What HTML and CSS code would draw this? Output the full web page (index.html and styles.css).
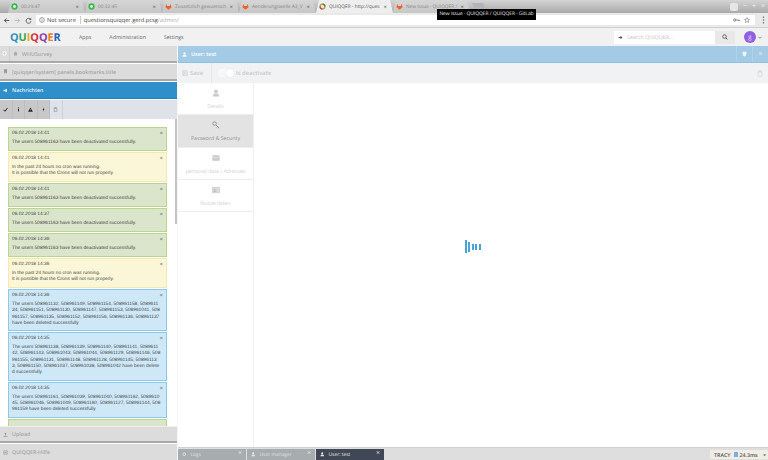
FILE: index.html
```html
<!DOCTYPE html>
<html lang="en">
<head>
<meta charset="utf-8">
<title>QUIQQER</title>
<link rel="stylesheet" href="styles.css">
</head>
<body>
<div class="tabstrip">
  <div class="tab"><svg class="fav" viewBox="0 0 10 10"><circle cx="5" cy="5" r="4.5" fill="#3cb94a"/><circle cx="5" cy="5" r="2" fill="#e8f8ea"/></svg><span class="tab-title">00:29:47</span><span class="tab-x">×</span></div>
  <div class="tab"><svg class="fav" viewBox="0 0 10 10"><circle cx="5" cy="5" r="4.5" fill="#3cb94a"/><circle cx="5" cy="5" r="2" fill="#e8f8ea"/></svg><span class="tab-title">00:32:45</span><span class="tab-x">×</span></div>
  <div class="tab"><svg class="fav" viewBox="0 0 10 10"><path d="M5 9.5 0.6 6 1.8 1l1.2 3.3h4L8.2 1l1.2 5z" fill="#e8662c"/></svg><span class="tab-title">Zusaetzlich gewuensch</span><span class="tab-x">×</span></div>
  <div class="tab"><svg class="fav" viewBox="0 0 10 10"><path d="M5 9.5 0.6 6 1.8 1l1.2 3.3h4L8.2 1l1.2 5z" fill="#e8662c"/></svg><span class="tab-title">Aenderungswelle A3_V</span><span class="tab-x">×</span></div>
  <div class="tab tab-active"><svg class="fav" viewBox="0 0 10 10"><circle cx="5" cy="5" r="3.4" fill="none" stroke="#c0a030" stroke-width="2"/><path d="M5 1.6A3.4 3.4 0 0 1 8.4 5" fill="none" stroke="#3a8f5a" stroke-width="2"/><path d="M1.6 5A3.4 3.4 0 0 0 5 8.4" fill="none" stroke="#c8487a" stroke-width="2"/></svg><span class="tab-title">QUIQQER - http://ques</span><span class="tab-x">×</span></div>
  <div class="tab"><svg class="fav" viewBox="0 0 10 10"><path d="M5 9.5 0.6 6 1.8 1l1.2 3.3h4L8.2 1l1.2 5z" fill="#e8662c"/></svg><span class="tab-title">New Issue · QUIQQER /</span><span class="tab-x">×</span></div>
  <div class="newtab"></div>
  <div class="winctl"><span class="winbtn"></span><span>−</span><span>+</span><span>×</span></div>
</div>
<div class="tooltip">New Issue · QUIQQER / QUIQQER · GitLab</div>
<div class="addrbar">
  <svg class="nav" viewBox="0 0 10 10"><path d="M9 5H2M5 2 2 5l3 3" fill="none" stroke="#555" stroke-width="1.400"/></svg>
  <svg class="nav" viewBox="0 0 10 10"><path d="M1 5h7M5 2l3 3-3 3" fill="none" stroke="#bbb" stroke-width="1.400"/></svg>
  <svg class="nav" viewBox="0 0 10 10"><path d="M8 3.500A3.500 3.500 0 1 0 8.500 6" fill="none" stroke="#555" stroke-width="1.300"/><path d="M8.800 1v3.200H5.600z" fill="#555"/></svg>
  <div class="omnibox">
    <svg class="info" viewBox="0 0 10 10"><circle cx="5" cy="5" r="4" fill="none" stroke="#555" stroke-width=".9"/><path d="M5 4.300v3M5 2.500v1" stroke="#555"/></svg><span class="secure">Not secure</span><span class="url"><b>questionsquiqqer.gerd.pcsg</b>/admin/</span>
    <svg class="keyicon" viewBox="0 0 12 6"><circle cx="3" cy="3" r="2" fill="none" stroke="#555" stroke-width="1.200"/><path d="M5 3h6v2M9 3v1.500" fill="none" stroke="#555"/></svg>
    <svg class="star" viewBox="0 0 10 10"><path d="M5 1l1.200 2.800 3 .3-2.300 2 .7 3L5 7.500 2.400 9.100l.7-3-2.300-2 3-.3z" fill="none" stroke="#555" stroke-width=".8"/></svg>
  </div>
  <svg class="menu" viewBox="0 0 3 12"><circle cx="1.5" cy="2" r="1.1" fill="#666"/><circle cx="1.5" cy="6" r="1.1" fill="#666"/><circle cx="1.5" cy="10" r="1.1" fill="#666"/></svg>
</div>
<header class="apphead">
  <div class="logo"><span class="q1">Q</span><span class="q2">U</span><span class="q3">I</span><span class="q4">Q</span><span class="q5">Q</span><span class="q6">E</span><span class="q7">R</span></div>
  <nav class="mainnav"><span>Apps</span><span>Administration</span><span>Settings</span></nav>
  <div class="search"><svg class="search-go" viewBox="0 0 10 10"><path d="M1 4h4V1.500L9 5 5 8.500V6H1z" fill="#555"/></svg><span class="search-text">Search QUIQQER...</span><span class="search-btn"><svg viewBox="0 0 10 10"><circle cx="4.200" cy="4.200" r="3" fill="none" stroke="#555" stroke-width="1.400"/><path d="M6.500 6.500 9 9" stroke="#555" stroke-width="1.600"/></svg></span></div>
  <div class="avatar">g</div><svg class="chev" viewBox="0 0 10 6"><path d="M1 1l4 4 4-4" fill="none" stroke="#555" stroke-width="1.500"/></svg>
</header>
<main class="workspace">
  <aside class="leftcol">
    <div class="collapsed"><span class="plus"><svg viewBox="0 0 10 10"><circle cx="5" cy="5" r="4.500" fill="#f4f4f4"/><path d="M5 2.500v5M2.500 5h5" stroke="#c8c8c8" stroke-width="1.200"/></svg></span><svg class="picon" viewBox="0 0 10 10"><path d="M5 1 .5 5H2v4h6V5h1.500z" fill="#aaa"/></svg><span>WHUSurvey</span></div>
    <div class="collapsed"><svg class="picon" viewBox="0 0 10 10"><path d="M2 .5h6v9L5 7.200 2 9.500z" fill="#999"/></svg><span>[quiqqer/system] panels.bookmarks.title</span></div>
    <div class="nach-head"><svg class="picon" viewBox="0 0 10 10"><path d="M1 3.500h3L8 1v8L4 6.500H1z" fill="#dcecf6"/></svg><span>Nachrichten</span></div>
    <div class="filterbar">
      <span class="fbtn"><svg viewBox="0 0 10 10"><path d="M1 5.500 4 8.500 9 2" fill="none" stroke="#222" stroke-width="2"/></svg></span>
      <span class="fbtn"><svg viewBox="0 0 10 10"><path d="M5 3.800v5M5 1v1.800" stroke="#222" stroke-width="2"/></svg></span>
      <span class="fbtn"><svg viewBox="0 0 10 10"><path d="M5 1 9.800 9.300H.2z" fill="#222"/><path d="M5 4v3" stroke="#ccc"/></svg></span>
      <span class="fbtn"><svg viewBox="0 0 10 10"><path d="M6 .5 3 5.500h1.800L3.800 9.500 7 4H5.200z" fill="#222"/></svg></span>
      <span class="fbtn fbtn-plain"><svg viewBox="0 0 8 9"><path d="M1.500 2.500h5V8h-5zM1 1.500h6M3 1h2" fill="none" stroke="#777" stroke-width=".8"/></svg></span>
    </div>
    <div class="msgarea">
      <div class="msglist">
        <div class="msg ok h24"><span class="x">×</span><p class="date">06.02.2018 14:41</p><p>The users 508961163 have been deactivated successfully.</p></div>
        <div class="msg warn h30"><span class="x">×</span><p class="date">06.02.2018 14:41</p><p>In the past 24 hours no cron was running.<br>It is possible that the Crons will not run properly.</p></div>
        <div class="msg ok h24"><span class="x">×</span><p class="date">06.02.2018 14:41</p><p>The users 508961163 have been deactivated successfully.</p></div>
        <div class="msg ok h24"><span class="x">×</span><p class="date">06.02.2018 14:37</p><p>The users 508961163 have been deactivated successfully.</p></div>
        <div class="msg ok h24"><span class="x">×</span><p class="date">06.02.2018 14:36</p><p>The users 508961163 have been deactivated successfully.</p></div>
        <div class="msg warn h30"><span class="x">×</span><p class="date">06.02.2018 14:36</p><p>In the past 24 hours no cron was running.<br>It is possible that the Crons will not run properly.</p></div>
        <div class="msg info-msg"><span class="x">×</span><p class="date">06.02.2018 14:36</p><p>The users 508961132, 508961149, 508961154, 508961158, 5089611<br>34, 508961151, 508961130, 508961147, 508961153, 508961041, 508<br>961157, 508961135, 508961152, 508961156, 508961136, 508961137<br>have been deleted successfully</p></div>
        <div class="msg info-msg"><span class="x">×</span><p class="date">06.02.2018 14:35</p><p>The users 508961138, 508961139, 508961140, 508961141, 5089611<br>42, 508961143, 508961043, 508961044, 508961129, 508961146, 508<br>961155, 508961131, 508961148, 508961128, 508961145, 50896113<br>3, 508961150, 508961037, 508961038, 508961042 have been delete<br>d successfully</p></div>
        <div class="msg info-msg"><span class="x">×</span><p class="date">06.02.2018 14:35</p><p>The users 508961161, 508961039, 508961040, 508961162, 5089610<br>45, 508961046, 508961049, 508961160, 508961127, 508961144, 508<br>961159 have been deleted successfully</p></div>
        <div class="msg ok h24"></div>
      </div>
      <div class="scrolltrack"><div class="scrollthumb"></div></div>
    </div>
    <div class="collapsed upload"><svg class="picon" viewBox="0 0 10 10"><path d="M5 1 2.500 4H4v3h2V4h1.500zM1 8h8v1.500H1z" fill="#999"/></svg><span>Upload</span></div>
    <div class="collapsed last"><svg class="picon" viewBox="0 0 10 10"><path d="M1.500 1.500h7v7h-7z" fill="none" stroke="#999" stroke-width="1.200"/><path d="M3 4h4v2H3z" fill="#999"/></svg><span>QUIQQER-Hilfe</span></div>
  </aside>
  <section class="rightcol">
    <div class="user-head"><svg class="uicon" viewBox="0 0 10 10"><circle cx="5" cy="3" r="2.300" fill="#f2f8fc"/><path d="M1 9.500c0-3 1.500-4 4-4s4 1 4 4z" fill="#f2f8fc"/></svg><span class="utitle">User: test</span><span class="uh-btn"><svg viewBox="0 0 8 9"><path d="M1 1h6v3.500C7 6.500 5.500 8 4 8.500 2.500 8 1 6.500 1 4.500z" fill="#eef6fb"/></svg></span><span class="uh-btn">×</span></div>
    <div class="user-tools">
      <span class="save"><svg viewBox="0 0 9 9"><path d="M1 1h5.500L8 2.500V8H1zM2.500 1v2.500h3.500V1M2.500 8V5.500h4V8" fill="none" stroke="#c8c8c8" stroke-width=".8"/></svg>Save</span>
      <span class="toggle"><i></i></span><span class="deact">Is deactivate</span>
      <svg class="trash" viewBox="0 0 8 9"><path d="M1.500 2.500h5V8h-5zM1 1.500h6M3 1h2" fill="none" stroke="#d0d0d0" stroke-width=".8"/></svg>
    </div>
    <div class="user-body">
      <div class="cats">
        <div class="cat"><svg viewBox="0 0 10 10"><circle cx="5" cy="3" r="2.300" fill="#c9c9c9"/><path d="M1 9.500c0-3 1.500-4 4-4s4 1 4 4z" fill="#c9c9c9"/></svg><span>Details</span></div>
        <div class="cat cat-on"><svg viewBox="0 0 10 10"><circle cx="3.200" cy="3.200" r="2.200" fill="none" stroke="#8f8f8f" stroke-width="1.100"/><path d="M5 5l4 3.800M7.200 6.800 6 8.200M8.200 7.800 7.200 9" fill="none" stroke="#8f8f8f" stroke-width="1.100"/></svg><span>Password &amp; Security</span></div>
        <div class="cat"><svg viewBox="0 0 10 10"><path d="M.5 1.500h9v7h-9z" fill="#c9c9c9"/><path d="M.5 2.500 5 5.500l4.500-3" fill="none" stroke="#fff" stroke-width=".7"/></svg><span>personal data / Adresses</span></div>
        <div class="cat"><svg viewBox="0 0 10 8"><rect x=".4" y=".4" width="9.200" height="7.200" fill="#ddd" stroke="#c4c4c4" stroke-width=".6"/><path d="M3.500 1.800v3M2 3.500l1.500 1.500L5 3.500M1.500 6h4" stroke="#aaa" stroke-width=".7" fill="none"/></svg><span>Nutzerdaten</span></div>
      </div>
      <div class="content"></div>
    </div>
    <div class="taskbar">
      <span class="task"><svg class="ticon" viewBox="0 0 10 10"><circle cx="5" cy="5" r="3" fill="none" stroke="#e4e6ea" stroke-width="2"/></svg><span class="ttext">Logs</span><b>×</b></span>
      <span class="task"><svg class="ticon" viewBox="0 0 10 10"><circle cx="5" cy="3" r="2.300" fill="#e4e6ea"/><path d="M1 9.500c0-3 1.500-4 4-4s4 1 4 4z" fill="#e4e6ea"/></svg><span class="ttext">User manager</span><b>×</b></span>
      <span class="task task-on"><svg class="ticon" viewBox="0 0 10 10"><circle cx="5" cy="3" r="2.300" fill="#e4e6ea"/><path d="M1 9.500c0-3 1.500-4 4-4s4 1 4 4z" fill="#e4e6ea"/></svg><span class="ttext">User: test</span><b>×</b></span>
    </div>
    <div class="loader"><div class="spinner"><i class="s1"></i><i class="s2"></i><i class="s3"></i><i class="s3"></i><i class="s3"></i></div></div>
  </section>
</main>
<div class="tracy"><span>TRACY</span><i></i><span>24.3ms</span><span class="tx">×</span></div>
</body>
</html>
```
FILE: styles.css
```css
* { box-sizing: border-box; }
html, body { margin: 0; padding: 0; }
body { width: 768px; height: 460px; overflow: hidden; font-family: "Open Sans", "Liberation Sans", sans-serif; font-size: 5.300px; color: #555; background: #fff; position: relative; text-rendering: geometricPrecision; }
p { margin: 0; }

.tabstrip { height: 13px; display: flex; padding-left: 8px; background: linear-gradient(#d4d4d4, #a9a9a9); }
.tab { width: 77px; height: 13px; flex: none; display: flex; align-items: center; padding: 0 6px 0 3px; gap: 3px; background: linear-gradient(#d6d6d6, #c6c6c6); clip-path: polygon(0 100%, 3px 0, calc(100% - 3px) 0, 100% 100%); color: #888; font-size: 4.800px; white-space: nowrap; }
.tab-active { background: #eeeeee; color: #555; }
.tab .fav { width: 7px; height: 7px; flex: none; }
.tab-title { flex: 1; min-width: 0; }
.tab-x { font-size: 6px; color: #666; }
.newtab { width: 14px; height: 7px; margin: 3px 0 0 2px; background: #b5b5b5; clip-path: polygon(0 0, 80% 0, 100% 100%, 20% 100%); }
.winctl { margin-left: auto; margin-right: 3px; display: flex; align-items: center; gap: 5px; color: #f0f0f0; font-size: 7px; }
.winbtn { width: 8px; height: 8px; background: #e6e6e6; border-radius: 2px; }

.tooltip { position: absolute; left: 437px; top: 9px; width: 99px; height: 11px; background: #000; color: #eee; font-size: 4.900px; line-height: 11px; text-align: center; z-index: 5; white-space: nowrap; }

.addrbar { height: 14px; background: #e9e9e9; display: flex; align-items: center; padding-left: 3px; }
.nav { width: 7px; height: 7px; margin-right: 4px; flex: none; }
.omnibox { flex: 1; height: 10px; margin: 0 7px 0 0; background: #fff; display: flex; align-items: center; padding-left: 3px; font-size: 5.700px; color: #555; white-space: nowrap; }
.info { width: 6px; height: 6px; margin-right: 2px; flex: none; }
.secure { padding-right: 4px; border-right: 1px solid #ccc; margin-right: 3px; color: #444; }
.url { color: #aaa; }
.url b { color: #444; font-weight: 400; }
.keyicon { width: 7px; height: 4px; margin-left: auto; }
.star { width: 6px; height: 6px; margin: 0 5px 0 4px; }
.menu { width: 3px; height: 8px; margin-right: 3px; flex: none; }

.apphead { height: 19px; display: flex; align-items: center; background: #f1f1f1; border-top: 1px solid #d0d0d0; padding-left: 10px; }
.logo { font-weight: 700; font-size: 10.800px; width: 52px; white-space: nowrap; }
.q1 { color: #2a8fc8; } .q2 { color: #3aa04a; } .q3 { color: #d8b020; } .q4 { color: #d83030; } .q5 { color: #8a40a8; } .q6 { color: #e8801c; } .q7 { color: #2a60b8; }
.mainnav { display: flex; gap: 18px; margin-left: 17px; font-size: 5.300px; color: #666; }
.search { margin-left: auto; width: 121px; height: 13px; display: flex; align-items: center; background: #fff; padding-left: 4px; font-size: 5.300px; color: #c4c4c4; }
.search-go { width: 5px; height: 5px; margin-right: 4px; }
.search-text { flex: 1; }
.search-btn { width: 20px; height: 13px; background: #e8e8e8; display: flex; align-items: center; justify-content: center; }
.search-btn svg { width: 6px; height: 6px; }
.avatar { width: 12px; height: 12px; border-radius: 50%; background: #9060e0; color: #e8e0f8; margin-left: 9px; text-align: center; line-height: 12px; font-size: 6px; }
.chev { width: 4px; height: 3px; margin: 0 6px 0 2px; }

.workspace { height: 414px; display: flex; }
.leftcol { width: 177px; flex: none; display: flex; flex-direction: column; background: #fff; }
.collapsed { height: 17px; flex: none; background: #dcdcdc; border-bottom: 2px solid #a9a9a9; margin-bottom: 1px; padding-left: 3px; display: flex; align-items: center; gap: 4px; font-weight: 600; color: #a6a6a6; font-size: 5.300px; white-space: nowrap; }
.plus { width: 10px; height: 15px; margin-left: -3px; margin-right: -1px; border-right: 1px solid #cfcfcf; display: flex; align-items: center; justify-content: center; }
.plus svg { width: 5px; height: 5px; }
.picon { width: 5px; height: 5px; flex: none; }
.nach-head { height: 17px; flex: none; background: #2f8fca; border-bottom: 1px solid #2580b8; color: #e8f3fa; font-weight: 600; display: flex; align-items: center; gap: 4px; padding-left: 3px; }
.filterbar { height: 19px; background: #dfe2e8; display: flex; margin-top: 1px; flex: none; }
.fbtn { width: 12.500px; background: #c8c8c8; border-right: 1px solid #bdbdbd; display: flex; align-items: center; justify-content: center; }
.fbtn-plain { background: transparent; border-right: 1px solid #ccd0d6; }
.fbtn svg { width: 5px; height: 5px; }
.msgarea { flex: 1; min-height: 0; display: flex; overflow: hidden; padding-left: 8px; background: #fff; }
.msglist { width: 159px; padding-top: 8px; display: flex; flex-direction: column; gap: 1px; flex: none; }
.scrolltrack { width: 2px; margin-left: 8px; }
.scrollthumb { width: 2px; height: 105px; background: #c4c4c4; }
.msg { position: relative; flex: none; border: 1px solid; padding: 3px 3px 3px; line-height: 6.300px; color: #444; font-family: "Liberation Sans", sans-serif; font-size: 4.800px; white-space: nowrap; }
.msg .date { margin-bottom: 2.500px; line-height: 6.500px; }
.msg .x { position: absolute; right: 3px; top: 3px; font-size: 6px; color: #666; }
.ok { background: #dbe5cb; border-color: #b8d78c; }
.warn { background: #fcf6d8; border-color: #f5e9b0; }
.info-msg { background: #cfe8f8; border-color: #8cc9ea; }
.h24 { height: 24px; }
.h30 { height: 30px; }
.upload { border-top: 1px solid #eee; }
.last { border-bottom: 0; height: 16px; margin: 0; }

.rightcol { flex: 1; min-width: 0; display: flex; flex-direction: column; padding-left: 1px; background: #f6f6f6; position: relative; }
.user-head { height: 17px; background: #a3cbe5; border-bottom: 1px solid #8fc0e0; display: flex; align-items: center; color: #f2f8fc; font-weight: 700; padding-left: 4px; flex: none; }
.uicon { width: 5px; height: 5px; margin-right: 4px; }
.utitle { flex: 1; }
.uh-btn { width: 16px; height: 16px; border-left: 1px solid #b0d3ea; display: flex; align-items: center; justify-content: center; font-size: 7px; font-weight: 400; }
.uh-btn svg { width: 5px; height: 6px; }
.user-tools { height: 20px; background: #f1f2f4; display: flex; align-items: center; padding-left: 4px; color: #cacaca; font-weight: 600; font-size: 5.800px; flex: none; white-space: nowrap; }
.save { display: flex; align-items: center; gap: 2px; width: 30px; height: 20px; border-right: 1px solid #e6e6e8; }
.save svg { width: 6px; height: 6px; }
.toggle { width: 16px; height: 8px; border-radius: 4px; background: #f8f8f8; margin-left: 6px; display: flex; justify-content: flex-end; }
.toggle i { width: 8px; height: 8px; border-radius: 50%; background: #fff; box-shadow: 0 0 1px #ccc; }
.deact { margin-left: 2px; }
.trash { width: 6px; height: 7px; margin-left: auto; margin-right: 5px; }
.user-body { flex: 1; min-height: 0; display: flex; background: #fff; }
.cats { width: 76px; border-right: 1px solid #f0f0f0; flex: none; }
.cat { height: 32.300px; border-bottom: 1px solid #eee; display: flex; flex-direction: column; align-items: center; justify-content: center; gap: 5px; color: #d0d0d0; font-size: 5.200px; white-space: nowrap; padding-top: 2px; }
.cat svg { width: 8px; height: 8px; }
.cat-on { background: #e3e3e3; color: #8f8f8f; }
.content { flex: 1; }
.loader { position: absolute; inset: 0 0 13px 0; display: flex; align-items: center; justify-content: center; pointer-events: none; }
.spinner { display: flex; align-items: center; gap: 1.500px; }
.spinner i { display: block; width: 2px; background: #4aa3d8; }
.s1 { height: 13px; }
.s2 { height: 10px; }
.s3 { height: 6px; }
.taskbar { height: 13px; background: #dedede; border-top: 1px solid #d0d0d0; display: flex; gap: 1px; padding-top: 1px; flex: none; }
.task { width: 68px; height: 11px; background: #a7acae; color: #dde0e2; display: flex; align-items: center; padding: 0 4px; font-size: 4.900px; white-space: nowrap; }
.ticon { width: 4.500px; height: 4.500px; margin-right: 4px; flex: none; }
.ttext { flex: 1; }
.task b { font-weight: 400; font-size: 7px; margin-top: -2px; color: #eee; }
.task-on { background: #3f4854; color: #e4e6ea; }

.tracy { position: absolute; right: 0; bottom: 1px; width: 58px; height: 9px; background: #f0ede4; display: flex; align-items: center; gap: 4px; padding-left: 4px; font-size: 5.300px; color: #555; font-weight: 600; white-space: nowrap; }
.tracy i { width: 4px; height: 5px; background: #7ab0e0; margin-right: -3px; }
.tx { margin-left: auto; margin-right: 2px; }
```
